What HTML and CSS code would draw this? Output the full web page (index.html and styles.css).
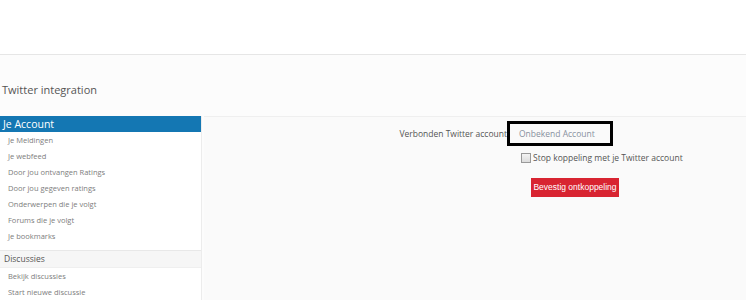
FILE: index.html
```html
<!DOCTYPE html>
<html lang="nl">
<head>
    <meta charset="UTF-8">
    <title>Twitter integration</title>
    <link rel="stylesheet" href="styles.css">
</head>
<body>
    <div class="topbar"></div>
    <div class="page">
        <div class="page-title">Twitter integration</div>
        <div class="layout">
            <div class="sidebar">
                <div class="side-head">Je Account</div>
                <ul class="side-list">
                    <li>Je Meldingen</li>
                    <li>Je webfeed</li>
                    <li>Door jou ontvangen Ratings</li>
                    <li>Door jou gegeven ratings</li>
                    <li>Onderwerpen die je volgt</li>
                    <li>Forums die je volgt</li>
                    <li>Je bookmarks</li>
                </ul>
                <div class="side-sub">Discussies</div>
                <ul class="side-list">
                    <li>Bekijk discussies</li>
                    <li>Start nieuwe discussie</li>
                </ul>
            </div>
            <div class="main">
                <div class="form-row">
                    <div class="label">Verbonden Twitter account</div>
                    <div class="account-box">Onbekend Account</div>
                </div>
                <label class="check-row">
                    <span class="checkbox"></span>
                    Stop koppeling met je Twitter account
                </label>
                <div class="button-row">
                    <button class="btn-red">Bevestig ontkoppeling</button>
                </div>
            </div>
        </div>
    </div>
</body>
</html>
```

FILE: styles.css
```css
body {
    margin: 0;
    font-family: "Open Sans", Arial, sans-serif;
    background: #fcfcfc;
    color: #555;
}
.topbar {
    height: 54px;
    background: #ffffff;
    border-bottom: 1px solid #e6e6e6;
}
.page-title {
    font-size: 11px;
    color: #555;
    padding: 27px 0 0 2px;
    height: 34px;
}
.layout {
    display: flex;
    align-items: stretch;
}
.sidebar {
    width: 201px;
    background: #ffffff;
    border-right: 1px solid #ececec;
    flex-shrink: 0;
}
.side-head {
    background: #1477b3;
    color: #ffffff;
    font-size: 10.5px;
    height: 16px;
    line-height: 16px;
    padding-left: 3px;
}
.side-list {
    list-style: none;
    margin: 0;
    padding: 0 0 6px 0;
}
.side-list li {
    font-size: 7.5px;
    color: #7d7d7d;
    height: 16px;
    line-height: 16px;
    padding-left: 8px;
}
.side-sub {
    background: #f6f6f6;
    border-top: 1px solid #e8e8e8;
    border-bottom: 1px solid #efefef;
    font-size: 8.5px;
    color: #555;
    height: 16px;
    line-height: 16px;
    padding-left: 4px;
}
.main {
    flex: 1;
    border-top: 1px solid #efefef;
    background: #fafafa;
    padding-top: 4px;
    margin-left: 2px;
}
.form-row {
    display: flex;
    align-items: center;
}
.label {
    width: 303px;
    text-align: right;
    font-size: 8.5px;
    color: #555;
}
.account-box {
    border: 3px solid #000;
    width: 91px;
    height: 19px;
    line-height: 19px;
    padding-left: 9px;
    font-size: 8.5px;
    color: #8891a0;
    background: #fafafa;
}
.check-row {
    display: flex;
    align-items: center;
    margin: 6px 0 0 317px;
    font-size: 8.5px;
    color: #555;
    gap: 2px;
}
.checkbox {
    width: 8px;
    height: 8px;
    border: 1px solid #999;
    background: linear-gradient(#f4f4f4, #dcdcdc);
}
.button-row {
    margin: 10px 0 0 327px;
}
.btn-red {
    background: #d82431;
    color: #ffffff;
    border: none;
    font-family: "Liberation Sans", Arial, sans-serif;
    font-size: 8.5px;
    height: 19px;
    padding: 0;
    width: 88px;
    white-space: nowrap;
}
```
